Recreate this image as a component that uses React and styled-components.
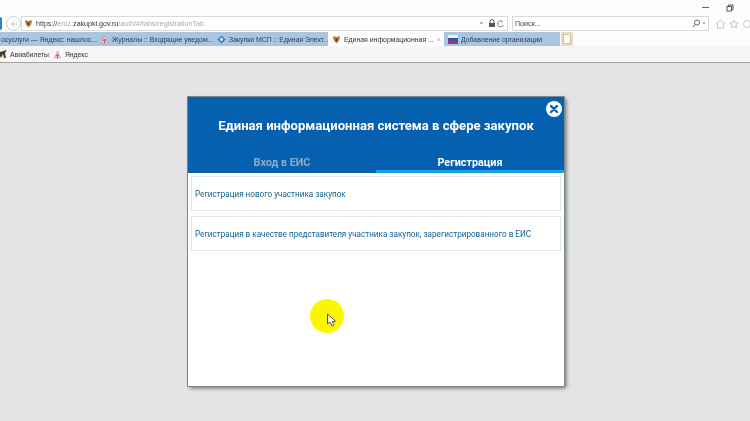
import React from 'react'
import styled, { createGlobalStyle } from 'styled-components'

const Global = createGlobalStyle`
  html, body { margin: 0; padding: 0; }
  body {
    width: 750px;
    height: 421px;
    overflow: hidden;
    background: #e4e4e4;
    font-family: "Liberation Sans", Arial, sans-serif;
  }
`

const Screen = styled.div`
  width: 750px;
  height: 421px;
  display: flex;
  flex-direction: column;
  position: relative;
  overflow: hidden;
`

const Chrome = styled.header`
  height: 62px;
  background: #fdfdfd;
  border-bottom: 1px solid #a4a4a4;
  display: flex;
  flex-direction: column;
  flex: none;
  filter: blur(0.4px);
`

const TitleBar = styled.div`
  height: 15px;
  display: flex;
  justify-content: flex-end;
  align-items: center;
  gap: 17px;
  padding: 0 16px 0 0;
  box-sizing: border-box;
`

const AddressRow = styled.div`
  height: 17px;
  display: flex;
  align-items: center;
`

const BackEdge = styled.span`
  width: 2px;
  height: 13px;
  background: #2f7fc4;
  border-radius: 0 7px 7px 0;
  flex: none;
`

const ForwardBtn = styled.span`
  width: 15px;
  height: 15px;
  margin-left: 4px;
  border: 1px solid #c3d1e0;
  border-radius: 50%;
  box-sizing: border-box;
  display: flex;
  align-items: center;
  justify-content: center;
  flex: none;
`

const Field = styled.div`
  height: 15px;
  box-sizing: border-box;
  border: 1px solid #d9d9d9;
  background: #fff;
  display: flex;
  align-items: center;
  font-size: 7.1px;
  color: #555;
  width: ${p => p.$width}px;
  margin-left: ${p => p.$left}px;
  padding: 0 2px;
  gap: 3px;
  flex: none;
`

const Url = styled.span`
  flex: 1;
  color: ${p => p.$color || '#aaa'};
  white-space: nowrap;
  b { color: #333; font-weight: 400; }
  i { color: #444; font-style: normal; }
`

const ToolIcons = styled.div`
  display: flex;
  align-items: center;
  gap: 3px;
  margin-left: 6px;
`

const TabRow = styled.div`
  height: 14px;
  display: flex;
  align-items: stretch;
`

const Tab = styled.div`
  width: ${p => p.$width}px;
  box-sizing: border-box;
  flex: none;
  display: flex;
  align-items: center;
  gap: ${p => p.$gap || 3}px;
  padding-left: ${p => p.$pad || 1}px;
  background: ${p => (p.$active ? '#fdfdfd' : '#a9c5df')};
  color: ${p => (p.$active ? '#333' : '#2c3f55')};
  font-size: 6.9px;
  white-space: nowrap;
`

const TabLabel = styled.span`
  flex: 1;
`

const TabClose = styled.span`
  color: #9aa;
  font-size: 7px;
  margin-right: 3px;
`

const NewTab = styled.div`
  width: 12px;
  background: #e6dcc8;
  margin-left: 1px;
  display: flex;
  align-items: center;
  justify-content: center;
`

const FavRow = styled.div`
  flex: 1;
  background: #f6f6f6;
  display: flex;
  align-items: center;
  font-size: 6.8px;
  color: #333;
  gap: 4px;
`

const Fav = styled.span`
  display: inline-flex;
  align-items: center;
  gap: 3px;
`

const Page = styled.main`
  flex: 1;
  display: flex;
  justify-content: flex-start;
  align-items: flex-start;
  padding: 34px 0 0 188px;
`

const Modal = styled.section`
  width: 376px;
  height: 289px;
  background: #fff;
  box-shadow: 0 0 0 1px #7d8a8a, 2px 2px 4px rgba(50, 60, 60, 0.75);
  display: flex;
  flex-direction: column;
  position: relative;
`

const ModalHead = styled.div`
  height: 76px;
  background: #0560b0;
  display: flex;
  flex-direction: column;
  flex: none;
  filter: blur(0.35px);
`

const ModalTitle = styled.h1`
  margin: 0;
  height: 56px;
  padding-top: 20px;
  box-sizing: border-box;
  text-align: center;
  color: #fff;
  font-size: 13.1px;
  line-height: 18px;
  font-weight: 700;
  font-family: Roboto, "Liberation Sans", sans-serif;
`

const Tabs = styled.div`
  flex: 1;
  display: grid;
  grid-template-columns: 1fr 1fr;
`

const ModalTab = styled.div`
  text-align: center;
  font-family: Roboto, "Liberation Sans", sans-serif;
  font-weight: 700;
  font-size: 10.8px;
  line-height: 14px;
  padding-top: 3px;
  color: ${p => (p.$active ? '#fff' : '#8eabc9')};
  border-bottom: 3px solid ${p => (p.$active ? '#1c9be8' : 'transparent')};
`

const Close = styled.button`
  position: absolute;
  top: 4px;
  right: 2px;
  width: 16px;
  height: 16px;
  padding: 0;
  border: none;
  border-radius: 50%;
  background: #fff;
  display: flex;
  align-items: center;
  justify-content: center;
`

const List = styled.div`
  padding: 3px 3px 0;
  display: flex;
  flex-direction: column;
  gap: 5px;
  filter: blur(0.35px);
`

const Row = styled.a`
  display: flex;
  align-items: center;
  height: 35px;
  box-sizing: border-box;
  border: 1px solid #e3e6e8;
  padding-left: 3px;
  color: #17608f;
  font-family: Roboto, "Liberation Sans", sans-serif;
  font-size: 8.15px;
  white-space: nowrap;
`

const Highlight = styled.div`
  position: absolute;
  left: 310px;
  top: 299px;
  width: 34px;
  height: 34px;
  border-radius: 50%;
  background: #fbf500;
  display: flex;
  align-items: center;
  justify-content: center;
`

const Shield = () => (
  <svg width="9" height="9" viewBox="0 0 10 10" style={{ flex: 'none' }}>
    <path d="M1 2 L3 1 L5 3 L7 1 L9 2 L8 6 L5 9.5 L2 6 Z" fill="#a88a3c" />
    <path d="M4 3 H6 V6 L5 7.5 L4 6 Z" fill="#7a2f25" />
  </svg>
)

const Globe = ({ color = '#2f7fc4' }) => (
  <svg width="9" height="9" viewBox="0 0 10 10" style={{ flex: 'none' }}>
    <path d="M5 .5 L9.5 5 L5 9.5 L.5 5 Z" fill={color} />
    <circle cx="5" cy="5" r="1.6" fill="#fff" />
  </svg>
)

const Flag = () => (
  <svg width="10" height="9" viewBox="0 0 10 9" style={{ flex: 'none' }}>
    <rect width="10" height="3" y="0" fill="#eef" />
    <rect width="10" height="3" y="3" fill="#3a4fa8" />
    <rect width="10" height="3" y="6" fill="#b8324a" />
  </svg>
)

const Y = () => (
  <svg width="9" height="9" viewBox="0 0 10 10" style={{ flex: 'none' }}>
    <path d="M5 1 L8.5 9 H1.5 Z" fill="#eed8d4" stroke="#c98a80" strokeWidth=".6" />
    <path d="M3.5 6.5 L5 4.5 L6.5 6.5 M5 6 V9" stroke="#b8322b" fill="none" />
  </svg>
)

export default function App() {
  return (
    <Screen>
      <Global />
      <Chrome>
        <TitleBar>
          <svg width="7" height="2" viewBox="0 0 7 2"><rect width="7" height="1" fill="#666" /></svg>
          <svg width="8" height="8" viewBox="0 0 8 8" fill="none" stroke="#555">
            <rect x="1" y="2.5" width="4.5" height="4.5" />
            <path d="M2.5 2.5 V1 H7 V5.5 H5.5" />
          </svg>
        </TitleBar>
        <AddressRow>
          <BackEdge />
          <ForwardBtn>
            <svg width="8" height="8" viewBox="0 0 8 8" fill="none" stroke="#b9c9da">
              <path d="M7 4 H1.5 M4 1.5 L1.5 4 L4 6.5" />
            </svg>
          </ForwardBtn>
          <Field $width={487} $left={0}>
            <Shield />
            <Url><i>https://</i>eruz.<b>zakupki.gov.ru</b>/auth/#/tabs/registrationTab</Url>
            <svg width="26" height="9" viewBox="0 0 26 9" fill="none">
              <path d="M1 4 H4" stroke="#777" />
              <rect x="10" y="4" width="6" height="4" fill="#555" />
              <path d="M11 4 V2.5 A2 2 0 0 1 15 2.5 V4" stroke="#555" />
              <path d="M24 3 A3 3 0 1 0 24.4 6" stroke="#777" />
            </svg>
          </Field>
          <Field $width={197} $left={4}>
            <Url $color="#444">Поиск...</Url>
            <svg width="14" height="9" viewBox="0 0 14 9" fill="none" stroke="#666">
              <circle cx="5" cy="3.5" r="2.5" />
              <path d="M3 5.5 L1 8" />
              <path d="M11 4 H13" />
            </svg>
          </Field>
          <ToolIcons>
            <svg width="11" height="10" viewBox="0 0 11 10" fill="none" stroke="#bcc">
              <path d="M1 5 L5.5 1 L10 5 M2.5 4.5 V9 H8.5 V4.5" />
            </svg>
            <svg width="10" height="10" viewBox="0 0 10 10" fill="none" stroke="#bcc">
              <path d="M5 1 L6.2 3.8 L9.2 4 L6.9 6 L7.6 9 L5 7.4 L2.4 9 L3.1 6 L.8 4 L3.8 3.8 Z" />
            </svg>
            <svg width="10" height="10" viewBox="0 0 10 10" fill="none" stroke="#bcc">
              <circle cx="5" cy="5" r="3.5" />
            </svg>
          </ToolIcons>
        </AddressRow>
        <TabRow>
          <Tab $width={98}>
            <TabLabel>осуслуги — Яндекс: нашлос...</TabLabel>
          </Tab>
          <Tab $width={116} $pad={2}>
            <Y />
            <TabLabel>Журналы :: Входящие уведом...</TabLabel>
          </Tab>
          <Tab $width={114} $pad={3}>
            <Globe />
            <TabLabel>Закупки МСП :: Единая Элект...</TabLabel>
          </Tab>
          <Tab $width={116} $pad={4} $active>
            <Shield />
            <TabLabel>Единая информационная ...</TabLabel>
            <TabClose>×</TabClose>
          </Tab>
          <Tab $width={116} $pad={4}>
            <Flag />
            <TabLabel>Добавление организации</TabLabel>
          </Tab>
          <NewTab>
            <svg width="8" height="10" viewBox="0 0 8 10">
              <path d="M.5 .5 H5 L7.5 3 V9.5 H.5 Z" fill="#fff" stroke="#d8b98a" />
            </svg>
          </NewTab>
        </TabRow>
        <FavRow>
          <Fav>
            <svg width="7" height="9" viewBox="0 0 7 9">
              <path d="M0 2 L7 0 L5 3 L6 8 L4 8 L3 4 L1 8 L0 6 Z" fill="#4a3a20" />
            </svg>
            Авиабилеты
          </Fav>
          <Fav>
            <Y />
            Яндекс
          </Fav>
        </FavRow>
      </Chrome>
      <Page>
        <Modal>
          <ModalHead>
            <ModalTitle>Единая информационная система в сфере закупок</ModalTitle>
            <Tabs>
              <ModalTab>Вход в ЕИС</ModalTab>
              <ModalTab $active>Регистрация</ModalTab>
            </Tabs>
          </ModalHead>
          <Close aria-label="Закрыть">
            <svg width="10" height="10" viewBox="0 0 10 10">
              <path d="M2 2 L8 8 M8 2 L2 8" stroke="#0560b0" strokeWidth="2.4" strokeLinecap="round" />
            </svg>
          </Close>
          <List>
            <Row>Регистрация нового участника закупок</Row>
            <Row>Регистрация в качестве представителя участника закупок, зарегистрированного в ЕИС</Row>
          </List>
        </Modal>
      </Page>
      <Highlight>
        <svg width="12" height="15" viewBox="0 0 12 15" style={{ marginLeft: 9, marginTop: 9 }}>
          <path d="M1.5 1 V11 L4 9 L6 13 L8 12 L6.2 8.5 L9.5 8.2 Z" fill="#fff" stroke="#555" strokeWidth="1" />
        </svg>
      </Highlight>
    </Screen>
  )
}
